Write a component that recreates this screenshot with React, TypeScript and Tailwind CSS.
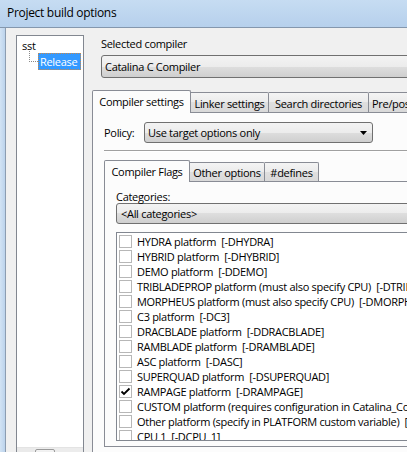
import React from "react";

const rows: { label: string; checked?: boolean }[] = [
  { label: "HYDRA platform  [-DHYDRA]" },
  { label: "HYBRID platform  [-DHYBRID]" },
  { label: "DEMO platform  [-DDEMO]" },
  { label: "TRIBLADEPROP platform (must also specify CPU)  [-DTRIBLADEPROP]" },
  { label: "MORPHEUS platform (must also specify CPU)  [-DMORPHEUS]" },
  { label: "C3 platform  [-DC3]" },
  { label: "DRACBLADE platform  [-DDRACBLADE]" },
  { label: "RAMBLADE platform  [-DRAMBLADE]" },
  { label: "ASC platform  [-DASC]" },
  { label: "SUPERQUAD platform  [-DSUPERQUAD]" },
  { label: "RAMPAGE platform  [-DRAMPAGE]", checked: true },
  { label: "CUSTOM platform (requires configuration in Catalina_Common)  [-DCUSTOM]" },
  { label: "Other platform (specify in PLATFORM custom variable)  [-D$(PLATFORM)]" },
  { label: "CPU 1  [-DCPU_1]" },
];

const comboBg =
  "bg-[linear-gradient(to_bottom,#f3f3f3_0%,#ececec_50%,#dedede_50%,#cfcfcf_100%)]";
const tabBg = "bg-[linear-gradient(to_bottom,#f4f4f4_0%,#ebebeb_50%,#dfdfdf_50%,#d9d9d9_100%)]";

function Arrow() {
  return (
    <svg width="7" height="4" viewBox="0 0 7 4" className="ml-auto mr-[5px] shrink-0">
      <path d="M0 0 H7 L3.5 4 Z" fill="#000" />
    </svg>
  );
}

export default function App() {
  return (
    <div className="w-[407px] h-[452px] overflow-hidden bg-[#f0f0f0] flex flex-col font-['Open_Sans',sans-serif] text-[11px] tracking-[-0.3px] leading-[15px] text-black">
      {/* Title bar */}
      <div className="h-[28px] shrink-0 border-b border-[#8497ad] bg-[linear-gradient(to_bottom,#c6dcf2,#b6d0ec)] flex items-center pl-[7px] pb-[2px]">
        <span className="text-[12px] tracking-[-0.3px]">Project build options</span>
      </div>

      <div className="flex flex-1 min-h-0">
        {/* window frame strip */}
        <div className="w-[6px] shrink-0 bg-[linear-gradient(to_right,#d2e3f4,#bcd3ec)] border-r border-[#8c9db1]" />

        {/* Tree */}
        <div className="ml-[10px] mt-[7px] w-[68px] h-[430px] shrink-0 border border-[#828790] bg-white flex flex-col">
          <div className="flex-1 pt-[3px]">
            <div className="pl-[5px] leading-[14px]">sst</div>
            <div className="flex items-start pl-[12px] h-[17px]">
              <svg width="9" height="19" className="mt-[-2px] shrink-0">
                <line x1="0.5" y1="0" x2="0.5" y2="10.5" stroke="#8a8a8a" strokeDasharray="1 1" />
                <line x1="0" y1="10.5" x2="9" y2="10.5" stroke="#8a8a8a" strokeDasharray="1 1" />
              </svg>
              <div className="w-[43px] h-[17px] bg-[#3399ff] text-white pl-[1px] border border-dotted border-[#c8884a] flex items-center">
                Release
              </div>
            </div>
          </div>
          <div className="h-[17px] shrink-0 bg-[#ececec] border-t border-[#e3e3e3] flex items-center">
            <div className="w-[17px] h-[17px] bg-[#eaeaea]" />
            <div className="ml-[1px] w-[20px] h-[15px] rounded-[2px] border border-[#9a9a9a] bg-[linear-gradient(to_bottom,#f3f3f3,#dcdcdc)]" />
          </div>
        </div>

        {/* Right column */}
        <div className="ml-[8px] w-[340px] shrink-0 flex flex-col">
          <div className="pl-[9px] mt-[8px]">Selected compiler</div>
          <div
            className={`ml-[9px] mt-[4px] h-[23px] w-[320px] shrink-0 rounded-[3px] border border-[#707070] ${comboBg} flex items-center pl-[3px]`}
          >
            Catalina C Compiler
          </div>

          {/* Outer tabs */}
          <div className="mt-[12px] flex items-end h-[22px] shrink-0 whitespace-nowrap">
            <div className="relative z-10 mb-[-1px] h-[23px] w-[99px] shrink-0 border-x border-t border-[#898c95] bg-[#fcfcfc] rounded-t-[2px] flex items-center justify-center pb-[1px]">
              Compiler settings
            </div>
            <div className={`h-[20px] w-[78px] shrink-0 border-t border-r border-[#898c95] ${tabBg} rounded-tr-[2px] flex items-center justify-center pt-[1px]`}>
              Linker settings
            </div>
            <div className={`h-[20px] w-[100px] shrink-0 border-t border-r border-[#898c95] ${tabBg} rounded-tr-[2px] flex items-center justify-center pt-[1px]`}>
              Search directories
            </div>
            <div className={`h-[20px] w-[90px] shrink-0 border-t border-r border-[#898c95] ${tabBg} flex items-center pl-[3px] pt-[1px] overflow-hidden`}>
              Pre/post build steps
            </div>
          </div>

          {/* Outer panel */}
          <div className="w-[330px] h-[400px] shrink-0 border border-[#898c95] bg-[#fcfcfc] pl-[11px] pt-[9px]">
            <div className="flex items-center h-[21px]">
              <div className="w-[40px] shrink-0">Policy:</div>
              <div className={`w-[229px] h-[21px] shrink-0 rounded-[3px] border border-[#707070] ${comboBg} flex items-center pl-[3px]`}>
                Use target options only
                <Arrow />
              </div>
            </div>

            {/* separator */}
            <div className="mt-[7px] h-[2px] border-t border-[#a0a0a0] border-b border-b-white" />

            {/* Inner tabs */}
            <div className="mt-[8px] flex items-end h-[21px] whitespace-nowrap">
              <div className="relative z-10 mb-[-1px] h-[22px] w-[86px] shrink-0 border-x border-t border-[#898c95] bg-[#fcfcfc] rounded-t-[2px] flex items-center justify-center pb-[1px]">
                Compiler Flags
              </div>
              <div className={`h-[19px] w-[75px] shrink-0 border-t border-r border-[#898c95] ${tabBg} rounded-tr-[2px] flex items-center justify-center pt-[1px]`}>
                Other options
              </div>
              <div className={`h-[19px] w-[54px] shrink-0 border-t border-r border-[#898c95] ${tabBg} rounded-tr-[2px] flex items-center justify-center pt-[1px]`}>
                #defines
              </div>
            </div>

            {/* Inner panel */}
            <div className="w-[310px] h-[266px] border border-[#898c95] bg-[#fcfcfc] pl-[11px] pt-[8px]">
              <div className="leading-[13px]">Categories:</div>
              <div className={`h-[21px] w-[300px] rounded-[3px] border border-[#707070] ${comboBg} flex items-center pl-[4px]`}>
                &lt;All categories&gt;
              </div>

              <div className="mt-[8px] h-[209px] w-[300px] border border-[#828790] bg-white pt-[1px] overflow-hidden">
                {rows.map((r) => (
                  <div key={r.label} className="h-[15px] flex items-center whitespace-pre">
                    <div className="ml-[2px] w-[13px] h-[13px] shrink-0 border border-[#b7b7b7] bg-white">
                      {r.checked && (
                        <svg width="11" height="11" viewBox="0 0 11 11">
                          <path d="M1.5 5.5 L4 8 L9.5 2.5" stroke="#000" strokeWidth="1.8" fill="none" />
                        </svg>
                      )}
                    </div>
                    <span className="ml-[5px]">{r.label}</span>
                  </div>
                ))}
              </div>
            </div>
          </div>
        </div>
      </div>
    </div>
  );
}
